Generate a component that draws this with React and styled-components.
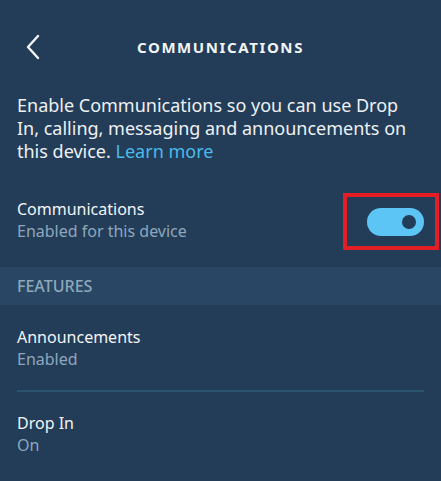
import React from "react";
import styled, { createGlobalStyle } from "styled-components";

const Global = createGlobalStyle`
  html, body { margin: 0; padding: 0; background: #233d59; }
  body { font-family: "Noto Sans", "Open Sans", sans-serif; }
`;

const Page = styled.div`
  width: 441px;
  height: 481px;
  background: #233d59;
  color: #f2f4f6;
  overflow: hidden;
`;

const Header = styled.div`
  height: 94px;
  display: grid;
  grid-template-columns: 60px 1fr 60px;
  align-items: center;
`;

const Back = styled.button`
  background: none;
  border: none;
  padding: 0 0 0 25px;
  display: flex;
  align-items: center;
  cursor: pointer;
`;

const Title = styled.h1`
  margin: 0;
  text-align: center;
  font-size: 15px;
  font-weight: 700;
  letter-spacing: 1.6px;
  color: #f2f4f6;
`;

const Intro = styled.p`
  margin: 0;
  padding: 0 17px;
  font-size: 18px;
  line-height: 23px;
  color: #eef1f4;
`;

const Link = styled.a`
  color: #4cb9ea;
  text-decoration: none;
`;

const Row = styled.div`
  display: flex;
  align-items: center;
  justify-content: space-between;
  padding: ${(p) => p.$pt}px 17px ${(p) => p.$pb}px;
`;

const Texts = styled.div`
  display: flex;
  flex-direction: column;
`;

const Label = styled.div`
  font-size: 16px;
  line-height: 22px;
  color: #f2f4f6;
`;

const Sub = styled.div`
  font-size: 16px;
  line-height: 22px;
  color: #8ea7bc;
`;

const Highlight = styled.div`
  width: 77px;
  height: 49px;
  border: 4px solid #e41e26;
  margin: -5px -15px -8px 0;
  display: flex;
  align-items: center;
  justify-content: flex-end;
  padding-right: 11px;
  box-sizing: content-box;
`;

const Track = styled.div`
  width: 57px;
  height: 28px;
  border-radius: 14px;
  background: #5cc5f5;
  display: flex;
  align-items: center;
  justify-content: flex-end;
  padding-right: 8px;
  box-sizing: border-box;
`;

const Knob = styled.div`
  width: 14px;
  height: 14px;
  border-radius: 50%;
  background: #233d59;
`;

const SectionHeader = styled.div`
  height: 38px;
  background: #294764;
  display: flex;
  align-items: center;
  padding: 0 17px;
  font-size: 16px;
  font-weight: 500;
  color: #8ea7bc;
`;

const Divider = styled.div`
  height: 2px;
  margin: 0 17px;
  background: #2b5470;
`;

export default function App() {
  return (
    <Page>
      <Global />
      <Header>
        <Back aria-label="Back">
          <svg width="16" height="26" viewBox="0 0 16 26" fill="none">
            <path d="M13 2 L3 13 L13 24" stroke="#f2f4f6" strokeWidth="2.4" strokeLinecap="round" strokeLinejoin="round" />
          </svg>
        </Back>
        <Title>COMMUNICATIONS</Title>
        <div />
      </Header>
      <Intro>
        Enable Communications so you can use Drop In, calling, messaging and announcements on this device. <Link>Learn more</Link>
      </Intro>
      <Row $pt={35} $pb={25}>
        <Texts>
          <Label>Communications</Label>
          <Sub>Enabled for this device</Sub>
        </Texts>
        <Highlight>
          <Track>
            <Knob />
          </Track>
        </Highlight>
      </Row>
      <SectionHeader>FEATURES</SectionHeader>
      <Row $pt={21} $pb={20}>
        <Texts>
          <Label>Announcements</Label>
          <Sub>Enabled</Sub>
        </Texts>
      </Row>
      <Divider />
      <Row $pt={20} $pb={20}>
        <Texts>
          <Label>Drop In</Label>
          <Sub>On</Sub>
        </Texts>
      </Row>
    </Page>
  );
}
